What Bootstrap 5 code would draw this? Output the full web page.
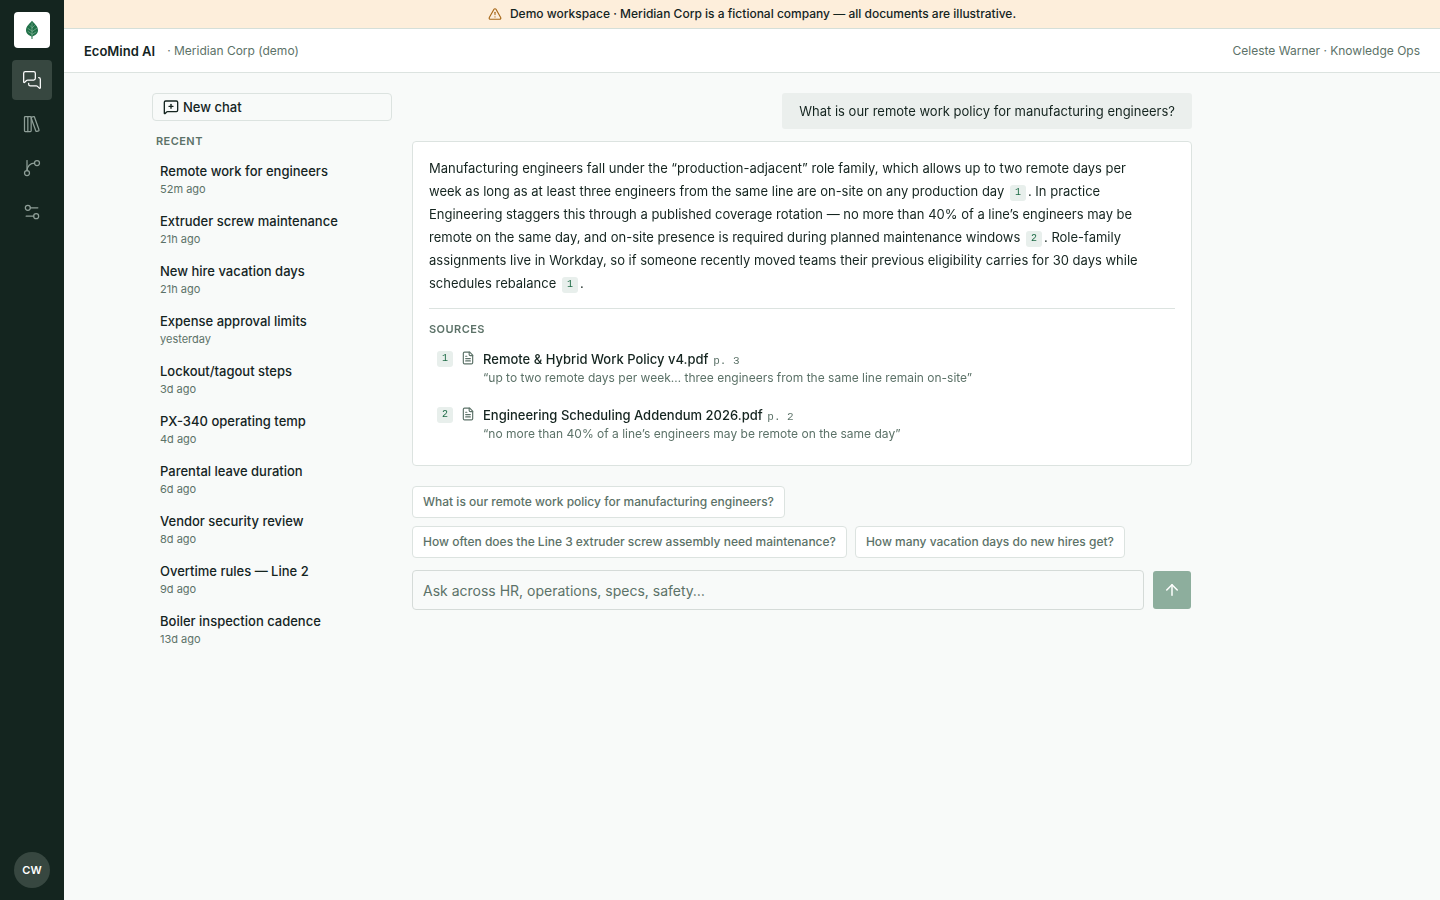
<!DOCTYPE html>
<html lang="en">
<head>
<meta charset="utf-8">
<meta name="viewport" content="width=device-width, initial-scale=1">
<title>EcoMind AI</title>
<link href="https://cdn.jsdelivr.net/npm/bootstrap@5.3.0/dist/css/bootstrap.min.css" rel="stylesheet">
<style>
:root{--ink:#14241f;--muted-ink:#5c7268;--line:#dce3e0;--canvas:#f8faf9;--brand:#1d6b45;--rail:#14251f}
body{font-family:Inter,"Liberation Sans",sans-serif;font-size:13px;line-height:20px;color:var(--ink);background:var(--canvas)}
svg{display:block;flex:none;fill:none;stroke:currentColor;stroke-width:2;stroke-linecap:round;stroke-linejoin:round}
.muted{color:var(--muted-ink)}
.rail{width:64px;height:100vh;background:var(--rail);padding:12px 0}
.logo{width:36px;height:36px;border-radius:4px;background:#fff}
.logo .veins{stroke:#8dbaa0;stroke-width:.6}
.rail-link{width:40px;height:40px;border-radius:4px;color:#8f9f98}
.rail-link svg{stroke-width:1.5}
.rail-link.active{background:#374740;color:#fff}
.avatar{width:36px;height:36px;background:#374740;color:#fff;border:0;font-size:11px;font-weight:600;padding:0}
.demo-bar{background:#fdeedb;border-bottom:1px solid #d5dfd9;height:29px;font-size:12px;font-weight:500}
.demo-bar svg{color:#a8691a}
.top-bar{background:#fff;border-bottom:1px solid var(--line);height:44px;padding:0 20px;font-size:12px}
.product{font-size:13px;font-weight:600}
.page-wrap{max-width:1240px;padding:20px}
.history{width:240px}
.new-chat{border:1px solid var(--line);border-radius:4px;height:28px;padding:0 10px;background:transparent;font-size:13px;font-weight:500;color:var(--ink);gap:4px}
.eyebrow{font-size:11px;line-height:16px;font-weight:600;letter-spacing:.04em;color:var(--muted-ink);margin:0}
.history .eyebrow{padding:12px 4px 6px}
.chat-link{padding:6px 8px;height:50px;color:var(--ink);font-weight:500;text-decoration:none}
.chat-link small{font-size:11px;line-height:16px;font-weight:400;color:var(--muted-ink)}
.thread{max-width:780px}
.question{background:#ebefed;border-radius:3px;padding:8px 17px}
.soft{will-change:transform}
.answer{background:#fff;border:1px solid var(--line);border-radius:4px;padding:15px 16px 14px;margin:12px 0 20px}
.answer-text{line-height:23px;margin:0 0 13px;max-width:725px}
.cite{display:inline-block;width:16px;height:16px;border:0;border-radius:3px;background:#e8efec;color:var(--brand);font:500 10px/16px "Liberation Mono",monospace;text-align:center;padding:0;vertical-align:1px;flex:none}
.answer-text .cite{margin:0 2px}
.sources{border-top:1px solid var(--line);padding-top:12px}
.source-list{gap:2px;margin-top:4px}
.source{padding:8px;gap:8px}
.source > .cite,.source > svg{margin-top:2px}
.source-name{color:var(--ink);font-weight:500;text-decoration:none}
.page-no{font:11px/16px "Liberation Mono",monospace;margin-left:1px}
.quote{font-size:12px;line-height:18px}
.chip{border:1px solid var(--line);border-radius:4px;background:#fff;color:var(--muted-ink);font-size:12px;font-weight:500;height:32px;padding:0 10px}
.composer{margin-top:12px}
.ask{height:40px;border:1px solid #d5dbd8;border-radius:4px;background:transparent;padding:0 10px;font-size:14px;color:var(--ink)}
.ask::placeholder{color:var(--muted-ink)}
.send{width:40px;height:40px;border:1px solid transparent;border-radius:4px;background:#8dae9d;background-clip:padding-box;color:#fff}
</style>
</head>
<body>
<div class="d-flex min-vh-100">
  <nav class="rail d-flex flex-column align-items-center sticky-top flex-shrink-0" aria-label="Main">
    <a href="#" class="logo d-flex align-items-center justify-content-center mb-2" aria-label="EcoMind home">
      <svg width="14" height="20" viewBox="0 0 14 20"><path d="M7 .8C5 3.500 1 6 1 10.200c0 3.600 3 5 5.500 6.200V19h1v-2.600C10 15.200 13 13.800 13 10.200 13 6 9 3.500 7 .8z" fill="#1f7048" stroke="none"/><path class="veins" d="M7 3v13M7 7.500 5 5.500M7 8l2.500-2.500M7 11 3 8.500M7 11.500l4.500-3M7 14l-4-2.500M7 14.500l4-2.500"/></svg>
    </a>
    <div class="d-flex flex-column gap-1 mt-1">
      <a href="#" class="rail-link active d-flex align-items-center justify-content-center" aria-label="Chat"><svg width="20" height="20" viewBox="0 0 24 24"><path d="M16 10a2 2 0 0 1-2 2H6.828a2 2 0 0 0-1.414.586l-2.202 2.202A.71.71 0 0 1 2 14.286V4a2 2 0 0 1 2-2h10a2 2 0 0 1 2 2z"/><path d="M20 9a2 2 0 0 1 2 2v10.286a.71.71 0 0 1-1.212.502l-2.202-2.202A2 2 0 0 0 17.172 19H10a2 2 0 0 1-2-2v-1"/></svg></a>
      <a href="#" class="rail-link d-flex align-items-center justify-content-center" aria-label="Library"><svg width="20" height="20" viewBox="0 0 24 24"><rect width="8" height="18" x="3" y="3" rx="1"/><path d="M7 3v18"/><path d="M20.400 18.900c.2.500-.1 1.100-.6 1.300l-1.900.7c-.5.200-1.100-.1-1.300-.6L11.100 5.100c-.2-.5.100-1.100.6-1.300l1.900-.7c.5-.2 1.100.1 1.300.6Z"/></svg></a>
      <a href="#" class="rail-link d-flex align-items-center justify-content-center" aria-label="Workflows"><svg width="20" height="20" viewBox="0 0 24 24"><path d="M6 3v12"/><circle cx="18" cy="6" r="3"/><circle cx="6" cy="18" r="3"/><path d="M15 6a9 9 0 0 0-9 9"/></svg></a>
      <a href="#" class="rail-link d-flex align-items-center justify-content-center" aria-label="Settings"><svg width="20" height="20" viewBox="0 0 24 24"><path d="M14 17H5"/><path d="M19 7h-9"/><circle cx="17" cy="17" r="3"/><circle cx="7" cy="7" r="3"/></svg></a>
    </div>
    <button type="button" class="avatar rounded-circle mt-auto">CW</button>
  </nav>
  <div class="flex-grow-1">
    <div class="demo-bar d-flex align-items-center justify-content-center gap-2" role="status">
      <svg width="14" height="14" viewBox="0 0 24 24"><path d="m21.730 18-8-14a2 2 0 0 0-3.480 0l-8 14A2 2 0 0 0 4 21h16a2 2 0 0 0 1.730-3"/><path d="M12 9v4"/><path d="M12 17h.01"/></svg>
      <span>Demo workspace · Meridian Corp is a fictional company — all documents are illustrative.</span>
    </div>
    <header class="top-bar d-flex align-items-center">
      <span class="product">EcoMind AI</span>
      <span class="muted ms-2 ps-1">· Meridian Corp (demo)</span>
      <span class="muted ms-auto">Celeste Warner · Knowledge Ops</span>
    </header>
    <div class="page-wrap mx-auto d-flex">
      <aside class="history flex-shrink-0 me-1">
        <button type="button" class="new-chat w-100 d-flex align-items-center"><svg width="16" height="16" viewBox="0 0 24 24"><path d="M22 17a2 2 0 0 1-2 2H6.828a2 2 0 0 0-1.414.586l-2.202 2.202A.71.71 0 0 1 2 21.286V5a2 2 0 0 1 2-2h16a2 2 0 0 1 2 2z"/><path d="M12 8v6"/><path d="M9 11h6"/></svg>New chat</button>
        <h2 class="eyebrow">RECENT</h2>
        <nav class="d-flex flex-column" aria-label="Recent chats">
          <a href="#" class="chat-link d-flex flex-column">Remote work for engineers<small>52m ago</small></a>
          <a href="#" class="chat-link d-flex flex-column">Extruder screw maintenance<small>21h ago</small></a>
          <a href="#" class="chat-link d-flex flex-column">New hire vacation days<small>21h ago</small></a>
          <a href="#" class="chat-link d-flex flex-column">Expense approval limits<small>yesterday</small></a>
          <a href="#" class="chat-link d-flex flex-column">Lockout/tagout steps<small>3d ago</small></a>
          <a href="#" class="chat-link d-flex flex-column">PX-340 operating temp<small>4d ago</small></a>
          <a href="#" class="chat-link d-flex flex-column">Parental leave duration<small>6d ago</small></a>
          <a href="#" class="chat-link d-flex flex-column">Vendor security review<small>8d ago</small></a>
          <a href="#" class="chat-link d-flex flex-column">Overtime rules — Line 2<small>9d ago</small></a>
          <a href="#" class="chat-link d-flex flex-column">Boiler inspection cadence<small>13d ago</small></a>
        </nav>
      </aside>
      <main class="thread flex-grow-1 ms-3">
        <div class="d-flex justify-content-end soft"><div class="question">What is our remote work policy for manufacturing engineers?</div></div>
        <article class="answer soft">
          <p class="answer-text">Manufacturing engineers fall under the “production-adjacent” role family, which allows up to two remote days per week as long as at least three engineers from the same line are on-site on any production day <button type="button" class="cite">1</button>. In practice Engineering staggers this through a published coverage rotation — no more than 40% of a line’s engineers may be remote on the same day, and on-site presence is required during planned maintenance windows <button type="button" class="cite">2</button>. Role-family assignments live in Workday, so if someone recently moved teams their previous eligibility carries for 30 days while schedules rebalance <button type="button" class="cite">1</button>.</p>
          <section class="sources">
            <h2 class="eyebrow">SOURCES</h2>
            <div class="source-list d-flex flex-column">
              <div class="source d-flex"><span class="cite">1</span><svg class="muted" width="14" height="14" viewBox="0 0 24 24"><path d="M15 2H6a2 2 0 0 0-2 2v16a2 2 0 0 0 2 2h12a2 2 0 0 0 2-2V7Z"/><path d="M14 2v4a2 2 0 0 0 2 2h4"/><path d="M10 9H8"/><path d="M16 13H8"/><path d="M16 17H8"/></svg>
                <div><a href="#" class="source-name">Remote &amp; Hybrid Work Policy v4.pdf</a> <span class="page-no muted">p. 3</span><div class="quote muted">“up to two remote days per week… three engineers from the same line remain on-site”</div></div></div>
              <div class="source d-flex"><span class="cite">2</span><svg class="muted" width="14" height="14" viewBox="0 0 24 24"><path d="M15 2H6a2 2 0 0 0-2 2v16a2 2 0 0 0 2 2h12a2 2 0 0 0 2-2V7Z"/><path d="M14 2v4a2 2 0 0 0 2 2h4"/><path d="M10 9H8"/><path d="M16 13H8"/><path d="M16 17H8"/></svg>
                <div><a href="#" class="source-name">Engineering Scheduling Addendum 2026.pdf</a> <span class="page-no muted">p. 2</span><div class="quote muted">“no more than 40% of a line’s engineers may be remote on the same day”</div></div></div>
            </div>
          </section>
        </article>
        <div class="d-flex flex-wrap gap-2">
          <button type="button" class="chip">What is our remote work policy for manufacturing engineers?</button>
          <button type="button" class="chip">How often does the Line 3 extruder screw assembly need maintenance?</button>
          <button type="button" class="chip">How many vacation days do new hires get?</button>
        </div>
        <form class="composer d-flex align-items-center gap-2">
          <label for="ask" class="visually-hidden">Ask a question</label>
          <input id="ask" type="text" class="ask flex-grow-1" placeholder="Ask across HR, operations, specs, safety…">
          <button type="button" class="send d-flex align-items-center justify-content-center p-0" aria-label="Send"><svg width="18" height="18" viewBox="0 0 24 24"><path d="m5 12 7-7 7 7"/><path d="M12 19V5"/></svg></button>
        </form>
      </main>
    </div>
  </div>
</div>
<script src="https://cdn.jsdelivr.net/npm/bootstrap@5.3.0/dist/js/bootstrap.bundle.min.js"></script>
</body>
</html>
